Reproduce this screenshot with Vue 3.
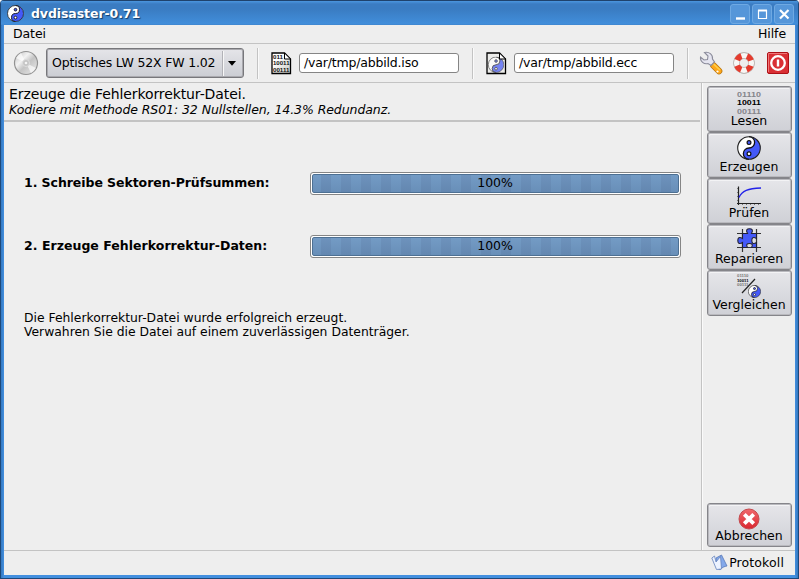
<script setup>
const actions = [
  { id: 'read', label: 'Lesen' },
  { id: 'create', label: 'Erzeugen' },
  { id: 'scan', label: 'Prüfen' },
  { id: 'fix', label: 'Reparieren' },
  { id: 'compare', label: 'Vergleichen' },
]
const steps = [
  { id: 'sums', label: '1. Schreibe Sektoren-Prüfsummen:', percent: 100 },
  { id: 'data', label: '2. Erzeuge Fehlerkorrektur-Daten:', percent: 100 },
]
</script>

<template>
  <div class="window">
    <svg width="0" height="0" class="defs">
      <defs>
        <symbol id="yinyang" viewBox="0 0 24 24">
          <circle cx="12" cy="12" r="11.3" fill="#fff" />
          <path d="M12 .7A5.650 5.650 0 0 1 12 12A5.650 5.650 0 0 0 12 23.300A11.300 11.300 0 0 0 12 .700Z" fill="#4459f8" />
          <path d="M12 .7A5.650 5.650 0 0 1 12 12A5.650 5.650 0 0 0 12 23.300" fill="none" stroke="#111" stroke-width="1.300" />
          <circle cx="12" cy="6.600" r="1.900" fill="#4459f8" stroke="#111" stroke-width="1.200" />
          <circle cx="12" cy="17.800" r="1.900" fill="#fff" stroke="#111" stroke-width="1.200" />
          <circle cx="12" cy="12" r="11.3" fill="none" stroke="#222" stroke-width="1.100" />
        </symbol>
      </defs>
    </svg>

    <header class="titlebar">
      <svg class="app-icon" width="17" height="17"><use href="#yinyang" /></svg>
      <h1>dvdisaster-0.71</h1>
      <div class="controls">
        <span class="ctl"><svg width="18" height="18"><path d="M5 13.500h9" stroke="#fff" stroke-width="2.400" /></svg></span>
        <span class="ctl"><svg width="18" height="18"><path d="M5.500 5.500h8v8h-8z" fill="none" stroke="#fff" stroke-width="1.200" /><path d="M5 5.500h9" stroke="#fff" stroke-width="2" /></svg></span>
        <span class="ctl"><svg width="18" height="18"><path d="M5 5l8.500 8.500M13.500 5L5 13.500" stroke="#fff" stroke-width="2.200" /></svg></span>
      </div>
    </header>

    <div class="client">
      <nav class="menubar"><span class="m-file">Datei</span><span class="m-help">Hilfe</span></nav>

      <div class="toolbar">
        <svg class="disc" width="26" height="26" viewBox="0 0 26 26">
          <defs><linearGradient id="dg" x1="0" y1="0" x2="1" y2="1"><stop offset="0" stop-color="#bbb" /><stop offset=".35" stop-color="#f2f2f2" /><stop offset=".55" stop-color="#c4c4c4" /><stop offset="1" stop-color="#eee" /></linearGradient></defs>
          <circle cx="13" cy="13" r="11.500" fill="url(#dg)" stroke="#929292" stroke-width="1.200" />
          <path d="M13 13L3 8A11 11 0 0 1 8 3ZM13 13L23 18A11 11 0 0 1 18 23Z" fill="#fff" opacity=".65" />
          <circle cx="13" cy="13" r="3.500" fill="#c4c4c4" stroke="#ddd" />
          <circle cx="13" cy="13" r="1.300" fill="#f4f4f4" />
        </svg>
        <div class="combo"><span class="combo-text">Optisches LW 52X FW 1.02</span><span class="combo-arrow"><svg width="8" height="5"><path d="M0 0h8L4 4.800z" fill="#000" /></svg></span></div>
        <i class="sep s1"></i>
        <svg class="file f1" width="21" height="23" viewBox="0 0 21 23">
          <defs><linearGradient id="pg" x1="0" y1="0" x2="1" y2="1"><stop offset=".3" stop-color="#fff" /><stop offset="1" stop-color="#c8c8c0" /></linearGradient></defs>
          <path d="M1 1h12.500l6 6v14.500H1z" fill="url(#pg)" stroke="#000" stroke-width="1.300" />
          <path d="M13.500 1v6h6z" fill="#fff" stroke="#000" />
          <g font-family="Liberation Sans" font-weight="700" font-size="6" fill="#111">
            <text x="2" y="6.500" textLength="10" lengthAdjust="spacingAndGlyphs">011</text><text x="2" y="13.200" textLength="16.500" lengthAdjust="spacingAndGlyphs">10011</text><text x="2" y="19.900" textLength="16.500" lengthAdjust="spacingAndGlyphs">00111</text>
          </g>
        </svg>
        <div class="field">/var/tmp/abbild.iso</div>
        <i class="sep s2"></i>
        <svg class="file f2" width="21" height="23" viewBox="0 0 21 23">
          <path d="M1 1h12.500l6 6v14.500H1z" fill="#ececea" stroke="#000" stroke-width="1.300" />
          <svg x="1.800" y="4.500" width="16.500" height="16.500" opacity=".7"><use href="#yinyang" /></svg>
          <path d="M13.500 1v6h6z" fill="#fff" stroke="#000" />
        </svg>
        <div class="field">/var/tmp/abbild.ecc</div>
        <i class="sep s3"></i>
        <svg class="wrench" width="24" height="24" viewBox="0 0 24 24">
          <path d="M14.500 14.500L20 20" stroke="#b8740d" stroke-width="6.600" stroke-linecap="round" />
          <path d="M14.500 14.500L20 20" stroke="#ffa81a" stroke-width="5.200" stroke-linecap="round" />
          <path d="M15 13.500L20.500 18.500" stroke="#ffd04a" stroke-width="1.500" stroke-linecap="round" />
          <path d="M5.500 1.500C10 .500 14 3.500 13.500 8L15.500 11L12 14.500L9 12.500C5 13.500 1 10.500 1.500 6L5 9L8.500 8.500L9 5Z" fill="#e5e5f0" stroke="#8b8c9b" stroke-width="1.100" />
          <circle cx="18.500" cy="20.500" r="1.100" fill="#fff" />
        </svg>
        <svg class="ring" width="22" height="22" viewBox="0 0 22 22">
          <circle cx="11" cy="11" r="7.400" fill="none" stroke="#a9a29e" stroke-width="6.600" />
          <circle cx="11" cy="11" r="7.400" fill="none" stroke="#f8f6f4" stroke-width="5.400" />
          <circle cx="11" cy="11" r="7.400" fill="none" stroke="#e43b2e" stroke-width="5.800" stroke-dasharray="6 5.624" stroke-dashoffset="-2.800" />
        </svg>
        <svg class="power" width="22" height="22" viewBox="0 0 22 22">
          <rect x=".5" y=".5" width="21" height="21" rx="1.500" fill="#d92f34" stroke="#ad1016" />
          <path d="M1.500 20V1.500H20" fill="none" stroke="#ef777a" />
          <circle cx="11" cy="11" r="6.800" fill="none" stroke="#fff" stroke-width="2.300" />
          <path d="M11 7.500v7" stroke="#fff" stroke-width="2.400" />
        </svg>
      </div>

      <div class="body">
        <main>
          <div class="heading">
            <h2>Erzeuge die Fehlerkorrektur-Datei.</h2>
            <p>Kodiere mit Methode RS01: 32 Nullstellen, 14.3% Redundanz.</p>
          </div>
          <section class="steps">
            <div v-for="step in steps" :key="step.id" :class="['step', step.id]">
              <strong>{{ step.label }}</strong>
              <div class="progress"><div class="fill" :style="{ width: step.percent + '%' }"></div><span>{{ step.percent }}%</span></div>
            </div>
          </section>
          <p class="result">Die Fehlerkorrektur-Datei wurde erfolgreich erzeugt.<br />Verwahren Sie die Datei auf einem zuverlässigen Datenträger.</p>
        </main>

        <aside>
          <button v-for="a in actions" :key="a.id" :class="['action', a.id]">
            <svg v-if="a.id === 'read'" width="26" height="26" font-family="Liberation Sans" font-weight="700" font-size="7.800">
              <text x="1" y="7.500" textLength="24" lengthAdjust="spacingAndGlyphs" fill="#85858a">01110</text><text x="1" y="16.200" textLength="24" lengthAdjust="spacingAndGlyphs" fill="#000">10011</text><text x="1" y="24.900" textLength="24" lengthAdjust="spacingAndGlyphs" fill="#85858a">00111</text>
            </svg>
            <svg v-else-if="a.id === 'create'" width="26" height="26"><use href="#yinyang" x="1" y="1" width="24" height="24" /></svg>
            <svg v-else-if="a.id === 'scan'" width="26" height="26" viewBox="0 0 26 26" fill="none">
              <path d="M2.500 5.500v18.500M1 22.500h24" stroke="#222" stroke-width="1.200" />
              <path d="M1 7.500h1M1 11.500h1M1 15.500h1M1 19.500h1M6.500 23v1M10.500 23v1M14.500 23v1M18.500 23v1M22.500 23v1" stroke="#777" />
              <path d="M3 16.500C6 9.500 12 7.500 25 7" stroke="#2222e8" stroke-width="1.300" />
            </svg>
            <svg v-else-if="a.id === 'fix'" width="26" height="26" viewBox="0 0 26 26">
              <path d="M1 6.500h24M1 20.500h24M6.500 2v23M20.500 2v23" stroke="#333" stroke-width="1.200" />
              <path d="M6.500 6.500H11.500C9.500 3 11 1.800 13.500 1.800S17.500 3 15.500 6.500H20.500V11.500C17 9.500 15.800 11 15.800 13.500S17 17.500 20.500 15.500V20.500H15.500C17.300 17.500 16 16.500 13.500 16.500S9.700 17.500 11.500 20.500H6.500V15.500C3 17.500 1.800 16 1.800 13.500S3 9.500 6.500 11.500Z" fill="#4459f8" stroke="#223" stroke-width="1.100" />
            </svg>
            <svg v-else width="26" height="26" viewBox="0 0 26 26" font-family="Liberation Sans" font-weight="700" font-size="3.900">
              <text x="1" y="4" textLength="11.500" lengthAdjust="spacingAndGlyphs" fill="#777">01110</text><text x="1" y="8.500" textLength="11.500" lengthAdjust="spacingAndGlyphs" fill="#000">10011</text><text x="1" y="13" textLength="11.500" lengthAdjust="spacingAndGlyphs" fill="#777">00111</text>
              <path d="M6 20L19 6" stroke="#222" stroke-width="1.200" />
              <use href="#yinyang" x="12" y="12" width="13" height="13" />
            </svg>
            <span>{{ a.label }}</span>
          </button>
          <button class="action abort">
            <svg width="22" height="22" viewBox="0 0 22 22">
              <defs><linearGradient id="rg" x1="0" y1="0" x2="0" y2="1"><stop offset="0" stop-color="#f0686c" /><stop offset="1" stop-color="#d92730" /></linearGradient></defs>
              <circle cx="11" cy="11" r="10" fill="url(#rg)" stroke="#c44a4e" />
              <path d="M6.300 6.300l9.400 9.400M15.700 6.300l-9.400 9.400" stroke="#fff" stroke-width="3.800" />
            </svg>
            <span>Abbrechen</span>
          </button>
        </aside>
      </div>

      <footer>
        <svg width="17" height="17" viewBox="0 0 17 17">
          <path d="M5 4L10.500 1L16 12C13.500 12.300 11 13.500 9 15.800L5.500 14Z" fill="#83a8ea" stroke="#5878b8" stroke-width=".8" />
          <path d="M.8 4L3.500 2L5 8L9.500 2.500L10.500 15L5.500 15.500Z" fill="#edf3ff" stroke="#6483bd" stroke-width=".8" />
        </svg>
        <span>Protokoll</span>
      </footer>
    </div>
  </div>
</template>

<style>
body { background: #fff; }
</style>

<style scoped>
* { box-sizing: border-box; }
.window {
  width: 799px; height: 579px; padding: 0 3px 3px; display: flex; flex-direction: column;
  border: 1px solid #1d4879; border-top: 0; border-radius: 4px 4px 0 0; overflow: hidden;
  background: linear-gradient(90deg, #3478c0, #438fdf 3px, #438fdf 794px, #3478c0);
  font: 12.500px/15px "DejaVu Sans", sans-serif; color: #000;
}
.defs { position: absolute; }
.titlebar {
  flex: 0 0 25px; margin: 0 -3px; padding: 2px 4px 0 6px; display: flex; align-items: center;
  background: linear-gradient(#1f426c 0 1px, #4b96df 1px, #3b7cc2 4px, #3a7cc2 9px, #418edb 24px, #3d82ca);
}
.app-icon { flex: none; }
h1 { margin: 0 0 0 7px; flex: 1; font-size: 12.500px; line-height: 15px; letter-spacing: -.08px; color: #fff; text-shadow: 1px 1px 1px #123a68; }
.controls { display: flex; gap: 2px; }
.ctl { width: 20px; height: 20px; border-radius: 3px; border: 1px solid #6ea9e3; background: #5596d9; display: flex; align-items: center; justify-content: center; }
.ctl svg { flex: none; }
.client { flex: 1; min-height: 0; background: #eee; display: flex; flex-direction: column; }
.menubar { flex: 0 0 19px; border-bottom: 1px solid #c3c3c3; display: flex; justify-content: space-between; padding: 1px 9px 0; }
.m-file { letter-spacing: -.1px; }
.m-help { letter-spacing: -.1px; }
.toolbar { flex: 0 0 39px; border-bottom: 1px solid #c3c3c3; display: flex; align-items: center; padding-left: 9px; }
.toolbar > * { flex: none; }
.combo {
  width: 198px; height: 30px; margin-left: 7px; display: flex; align-items: center; border: 1px solid #77777b; border-radius: 3px;
  background: linear-gradient(#e5e5e9, #cbcdd3); box-shadow: inset 0 0 0 1px #a9a9ae; padding-left: 5px;
}
.combo-text { width: 171px; white-space: nowrap; letter-spacing: -.18px; padding-bottom: 2px; }
.combo-arrow { height: 25px; border-left: 1px solid #f7f7f7; box-shadow: -1px 0 #b2b2b7; display: flex; align-items: center; padding-left: 4px; }
.sep { width: 2px; height: 31px; border-left: 1px solid #c3c3c3; background: #fafafa; }
.s1 { margin-left: 13px; }
.f1 { margin-left: 12px; }
.field { width: 160px; height: 20px; margin-left: 7px; padding: 1px 4px; border: 1px solid #858585; border-radius: 3px; background: #fff; line-height: 16px; letter-spacing: -.18px; }
.s2 { margin-left: 13px; }
.f2 { margin-left: 12px; }
.s3 { margin-left: 13px; }
.wrench { margin-left: 10px; }
.ring { margin-left: 10px; }
.power { margin-left: 12px; }
.body { flex: 1; min-height: 0; display: flex; }
main { width: 697px; }
.heading { width: 696px; height: 39px; padding: 3px 5px 0; border-bottom: 2px solid #c3c3c3; }
h2, p { margin: 0; font-weight: 400; white-space: nowrap; }
h2 { font-size: 14px; line-height: 17px; letter-spacing: -.1px; }
.heading p { line-height: 14px; font-style: italic; letter-spacing: -.08px; }
.steps { padding: 50px 0 0 20px; display: flex; flex-direction: column; gap: 40px; }
.step { height: 23px; display: flex; align-items: center; }
.step strong { width: 286px; white-space: nowrap; padding-bottom: 2px; }
.sums strong { letter-spacing: -.06px; }
.data strong { letter-spacing: .03px; }
.progress { width: 371px; height: 23px; border: 1px solid #858585; border-radius: 3px; background: #fff; padding: 1px; display: grid; }
.progress > * { grid-area: 1 / 1; }
.fill {
  border: 1px solid #4d7093; border-radius: 2px;
  background: linear-gradient(rgba(255,255,255,.03), rgba(60,80,110,.13)), repeating-linear-gradient(90deg, #6f98c3 0 8px, #698fba 8px 18px, #6f98c3 18px 20px);
}
.progress span { place-self: center; line-height: 15px; padding-bottom: 2px; padding-right: 1px; letter-spacing: -.1px; z-index: 1; }
.result { padding: 53px 0 0 20px; font-size: 12.370px; line-height: 14px; }
aside { width: 94px; border-left: 1px solid #c3c3c3; box-shadow: inset 1px 0 #fafafa; padding: 3px 4px 3px 5px; display: flex; flex-direction: column; }
.action {
  width: 85px; height: 46px; margin: 0; padding: 0; border: 1px solid #85858a; border-radius: 3px; background: linear-gradient(#e6e6ea, #cfd0d6);
  box-shadow: inset 0 0 0 1px #b9b9be, inset 1px 2px #f3f3f5; font: 12.500px/15px "DejaVu Sans", sans-serif; color: #000;
  display: flex; flex-direction: column; align-items: center; justify-content: flex-start; padding: 2px 1px 0 0;
}
.action svg { flex: none; height: 26px; overflow: visible; }
.action span { margin-top: -2px; }
.action.abort { margin-top: auto; height: 44px; padding-top: 4px; }
.action.abort svg { height: 22px; }
footer { flex: 0 0 25px; border-top: 1px solid #c3c3c3; display: flex; align-items: center; justify-content: flex-end; padding: 0 11px 1px 0; }
footer span { margin-left: 1px; letter-spacing: .12px; padding-bottom: 1px; }
</style>
